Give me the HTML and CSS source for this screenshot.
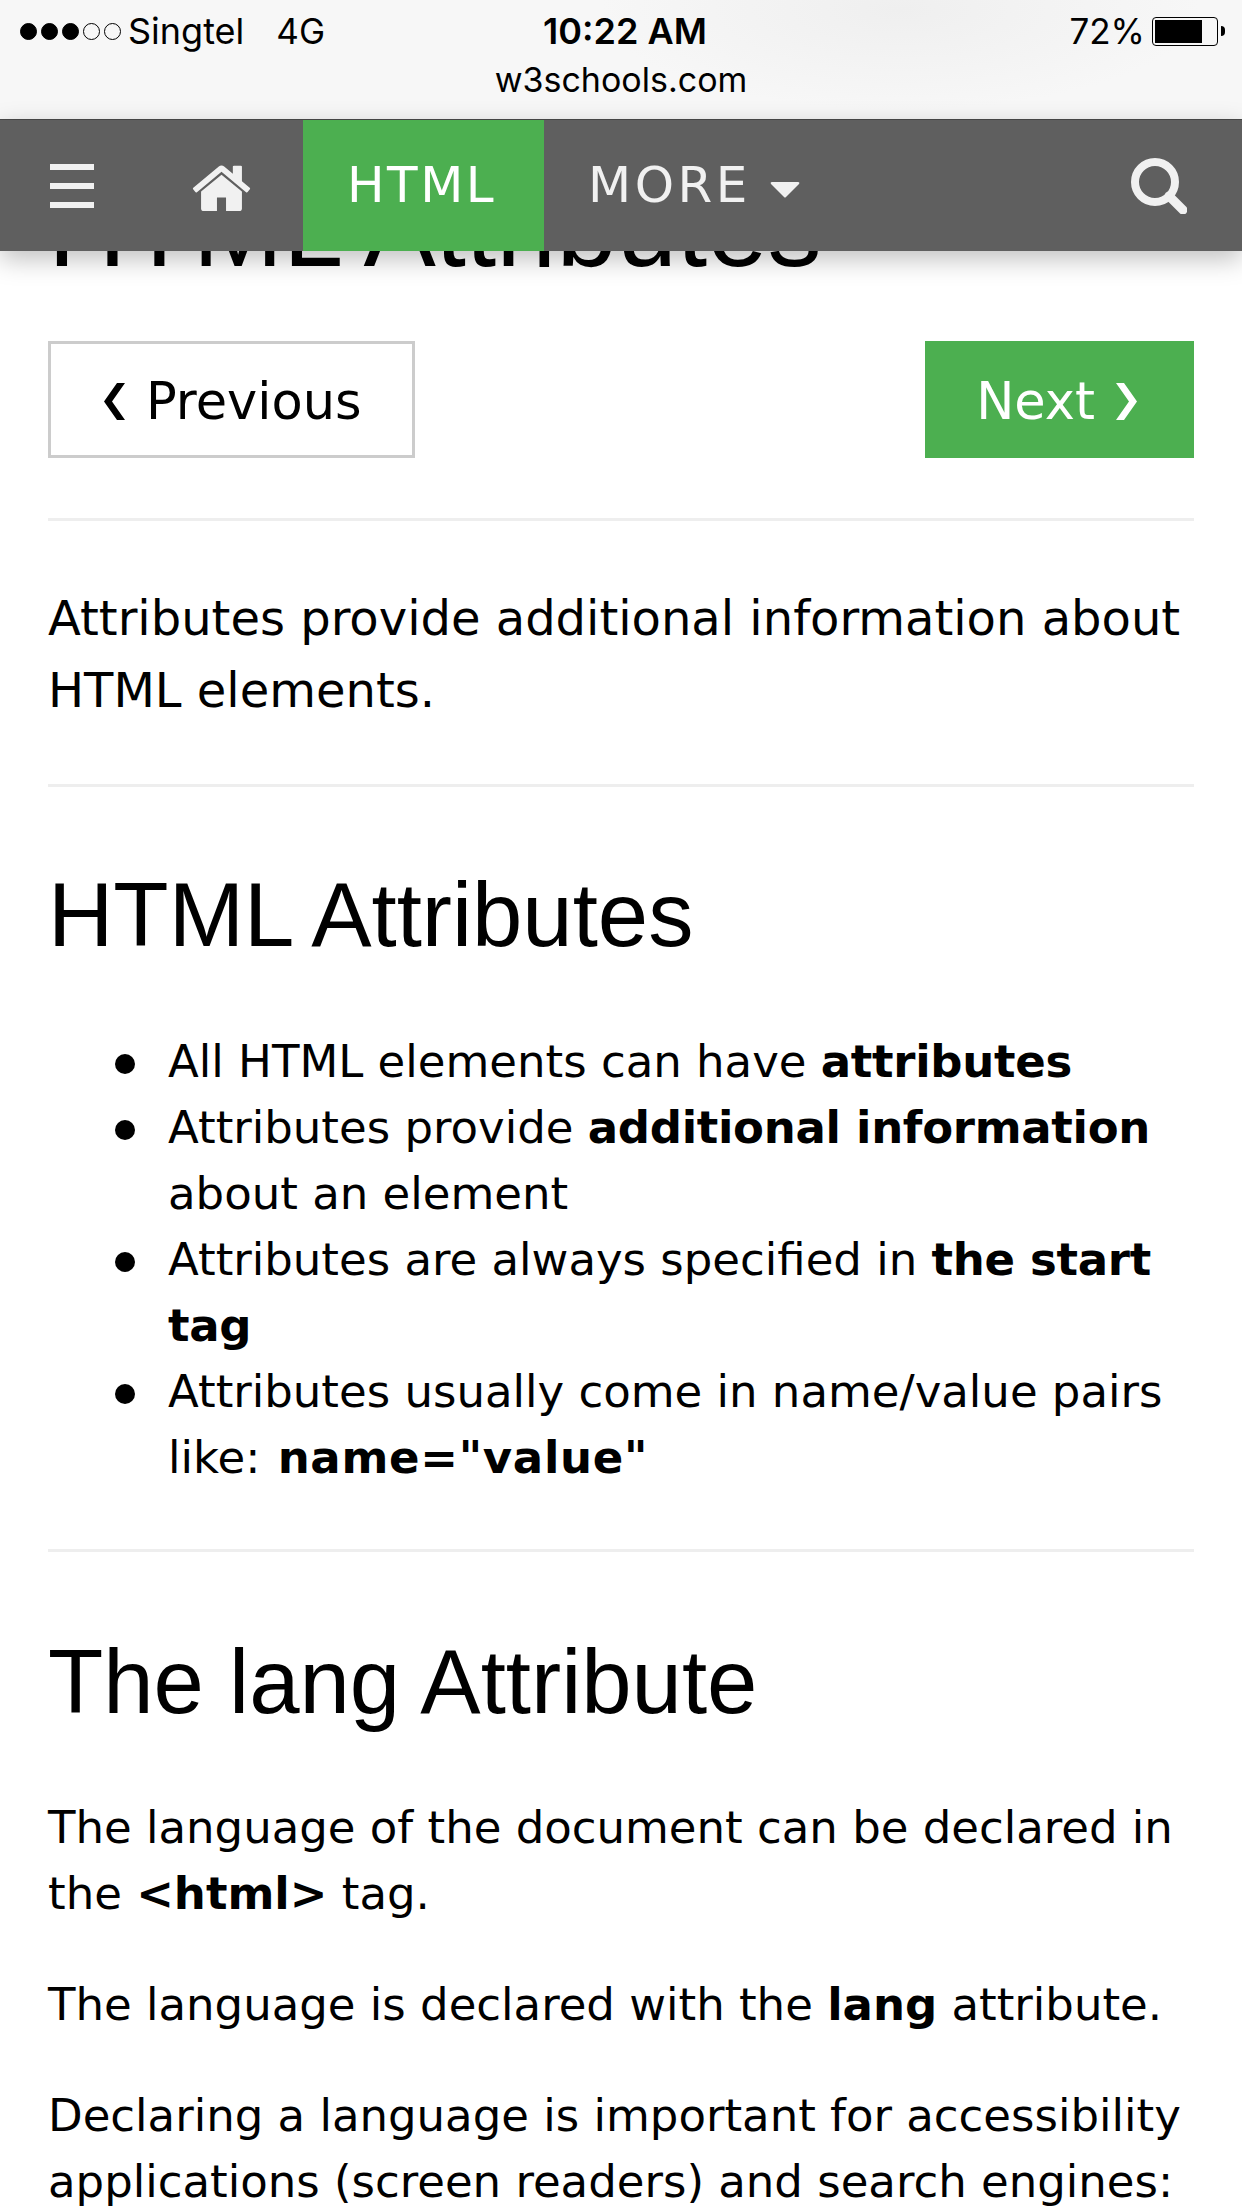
FILE: index.html
```html
<!DOCTYPE html>
<html lang="en">
<head>
  <meta charset="UTF-8">
  <title>HTML Attributes</title>
  <link rel="stylesheet" href="styles.css">
</head>
<body>
  <header class="top">
    <div class="status">
      <div class="status-row">
        <div class="carrier">
          <span class="dot on"></span><span class="dot on"></span><span class="dot on"></span><span class="dot"></span><span class="dot"></span>
          <span class="carrier-name">Singtel</span>
          <span class="network">4G</span>
        </div>
        <div class="clock">10:22 AM</div>
        <div class="power">
          <span>72%</span>
          <span class="battery"><span class="battery-level"></span></span>
          <span class="battery-nub"></span>
        </div>
      </div>
      <div class="domain">w3schools.com</div>
    </div>
    <nav class="nav">
      <a class="nav-menu" href="#">
        <svg width="44" height="44" viewBox="0 0 44 44"><path fill="#f1f1f1" d="M0 0h44v6H0zM0 19h44v6H0zM0 38h44v6H0z"/></svg>
      </a>
      <a class="nav-home" href="#">
        <svg width="59" height="50" viewBox="0 128 1664 1400"><path fill="#f1f1f1" d="M1408 992v480q0 26-19 45t-45 19h-384v-384h-256v384h-384q-26 0-45-19t-19-45v-480q0-1 .5-3t.5-3l575-474 575 474q1 2 1 6zm223-69l-62 74q-8 9-21 11h-3q-13 0-21-7l-692-577-692 577q-12 8-24 7-13-2-21-11l-62-74q-8-10-7-23.500t11-21.500l719-599q32-26 76-26t76 26l244 204v-195q0-14 9-23t23-9h192q14 0 23 9t9 23v408l219 182q10 8 11 21.500t-7 23.500z"/></svg>
      </a>
      <a class="nav-link active" href="#">HTML</a>
      <a class="nav-link more" href="#">MORE
        <svg class="caret" width="30" height="16" viewBox="0 0 30 16"><path fill="#f1f1f1" d="M2 0h26q2 0 1 2L16 15q-1 1-2 0L1 2Q0 0 2 0z"/></svg>
      </a>
      <a class="nav-search" href="#">
        <svg width="56" height="56" viewBox="0 0 56 56"><circle cx="24" cy="24" r="20" fill="none" stroke="#f1f1f1" stroke-width="8"/><path d="M38 38l14 14" fill="none" stroke="#f1f1f1" stroke-width="9" stroke-linecap="round"/></svg>
      </a>
    </nav>
  </header>

  <main class="main">
    <h1 class="title">HTML Attributes</h1>
    <div class="pager">
      <a class="btn btn-prev" href="#">
        <svg width="21" height="37" viewBox="0 0 21 37"><path d="M13 0h8L8 18.500 21 37h-8L0 18.500z"/></svg>
        Previous
      </a>
      <a class="btn btn-next" href="#">
        Next
        <svg width="21" height="37" viewBox="0 0 21 37"><path fill="#fff" d="M8 0H0l13 18.500L0 37h8l13-18.500z"/></svg>
      </a>
    </div>
    <hr>
    <p class="intro">Attributes provide additional information about HTML elements.</p>
    <hr>
    <h2>HTML Attributes</h2>
    <ul>
      <li>All HTML elements can have <b>attributes</b></li>
      <li>Attributes provide <b>additional information</b> about an element</li>
      <li>Attributes are always specified in <b>the start tag</b></li>
      <li>Attributes usually come in name/value pairs like: <b class="code">name="value"</b></li>
    </ul>
    <hr>
    <h2>The lang Attribute</h2>
    <p>The language of the document can be declared in the <b>&lt;html&gt;</b> tag.</p>
    <p>The language is declared with the <b>lang</b> attribute.</p>
    <p>Declaring a language is important for accessibility applications (screen readers) and search engines:</p>
  </main>
</body>
</html>
```

FILE: styles.css
```css
html, body {
  margin: 0;
  padding: 0;
  height: 2208px;
  overflow: hidden;
  background: #fff;
}

body {
  font-family: "DejaVu Sans", sans-serif;
  font-size: 45px;
  line-height: 66px;
  color: #000;
}

a {
  color: inherit;
  text-decoration: none;
}

.top {
  position: relative;
  z-index: 2;
}

/* status bar */
.status {
  height: 120px;
  box-sizing: border-box;
  padding-top: 10px;
  background: radial-gradient(ellipse 300px 100px at 900px 10px, #efefef, #f7f7f7);
  border-bottom: 1px solid #4a4a4a;
  font-family: Inter, "Liberation Sans", sans-serif;
  font-size: 35px;
  line-height: 42px;
}

.status-row {
  display: grid;
  grid-template-columns: 1fr auto 1fr;
  align-items: center;
  padding: 0 17px 0 20px;
}

.carrier {
  display: flex;
  align-items: center;
}

.dot {
  width: 15px;
  height: 15px;
  margin-right: 4px;
  border: 1px solid #000;
  border-radius: 50%;
}

.dot.on {
  background: #000;
}

.carrier-name {
  margin-left: 3px;
  font-size: 36px;
}

.network {
  margin-left: 32px;
}

.clock {
  margin-left: 5px;
  font-size: 36px;
  font-weight: 600;
}

.power {
  display: flex;
  align-items: center;
  justify-content: flex-end;
}

.battery {
  width: 66px;
  height: 29px;
  box-sizing: border-box;
  margin-left: 7px;
  padding: 2px;
  border: 1px solid #000;
  border-radius: 4px;
}

.battery-level {
  display: block;
  width: 47px;
  height: 100%;
  background: #000;
}

.battery-nub {
  width: 4px;
  height: 10px;
  margin-left: 3px;
  background: #000;
  border-radius: 0 5px 5px 0;
}

.domain {
  margin-top: 7px;
  font-size: 34px;
  text-align: center;
}

/* site nav */
.nav {
  display: flex;
  align-items: stretch;
  height: 131px;
  background: #5f5f5f;
  color: #f1f1f1;
  font-size: 50px;
  line-height: 131px;
  letter-spacing: 2.5px;
  box-shadow: 0 8px 24px rgba(0, 0, 0, 0.25);
}

.nav-menu {
  display: flex;
  align-items: center;
  width: 142px;
  padding-left: 50px;
  box-sizing: border-box;
}

.nav-home {
  display: flex;
  align-items: center;
  width: 161px;
  padding-left: 50px;
  box-sizing: border-box;
}

.nav-link {
  padding: 0 48px 0 44px;
}

.nav-link.active {
  width: 241px;
  box-sizing: border-box;
  background: #4caf50;
  color: #fff;
}

.nav-link.more {
  letter-spacing: 3.5px;
}

.caret {
  margin-left: 0;
  vertical-align: 4px;
}

.nav-search {
  display: flex;
  align-items: center;
  margin-left: auto;
  padding-right: 55px;
}

/* page */
.main {
  padding: 0 48px;
}

.title {
  margin: -72px 0 0;
  font-family: "Liberation Sans", sans-serif;
  font-size: 108.5px;
  font-weight: 400;
  line-height: 100px;
}

.pager {
  display: flex;
  justify-content: space-between;
  margin: 62px 0 60px;
}

.btn {
  display: flex;
  align-items: center;
  gap: 21px;
  height: 117px;
  box-sizing: border-box;
  padding: 4px 57px 0 51px;
  font-size: 51px;
}

.btn-prev {
  padding: 4px 50px 0 53px;
  border: 3px solid #ccc;
}

.btn-next {
  background: #4caf50;
  color: #fff;
}

hr {
  height: 3px;
  margin: 0;
  border: 0;
  background: #eee;
}

p {
  margin: 45px 0 0;
}

.intro {
  margin: 61px 0 58px;
  font-size: 48px;
  line-height: 72px;
}

h2 {
  margin: 68px 0 0;
  font-family: "Liberation Sans", sans-serif;
  font-size: 90.5px;
  font-weight: 400;
  line-height: 120px;
}

h2 + p {
  margin-top: 53px;
}

ul {
  margin: 54px 0 58px;
  padding-left: 120px;
  list-style: none;
}

ul + hr + h2 {
  margin-top: 70px;
}

li b {
  letter-spacing: -0.3px;
}

li b.code {
  margin-left: 3px;
  letter-spacing: 0.7px;
}

li::before {
  content: "";
  display: inline-block;
  width: 20px;
  height: 20px;
  margin: 0 33px 3px -53px;
  border-radius: 50%;
  background: #000;
}
```
